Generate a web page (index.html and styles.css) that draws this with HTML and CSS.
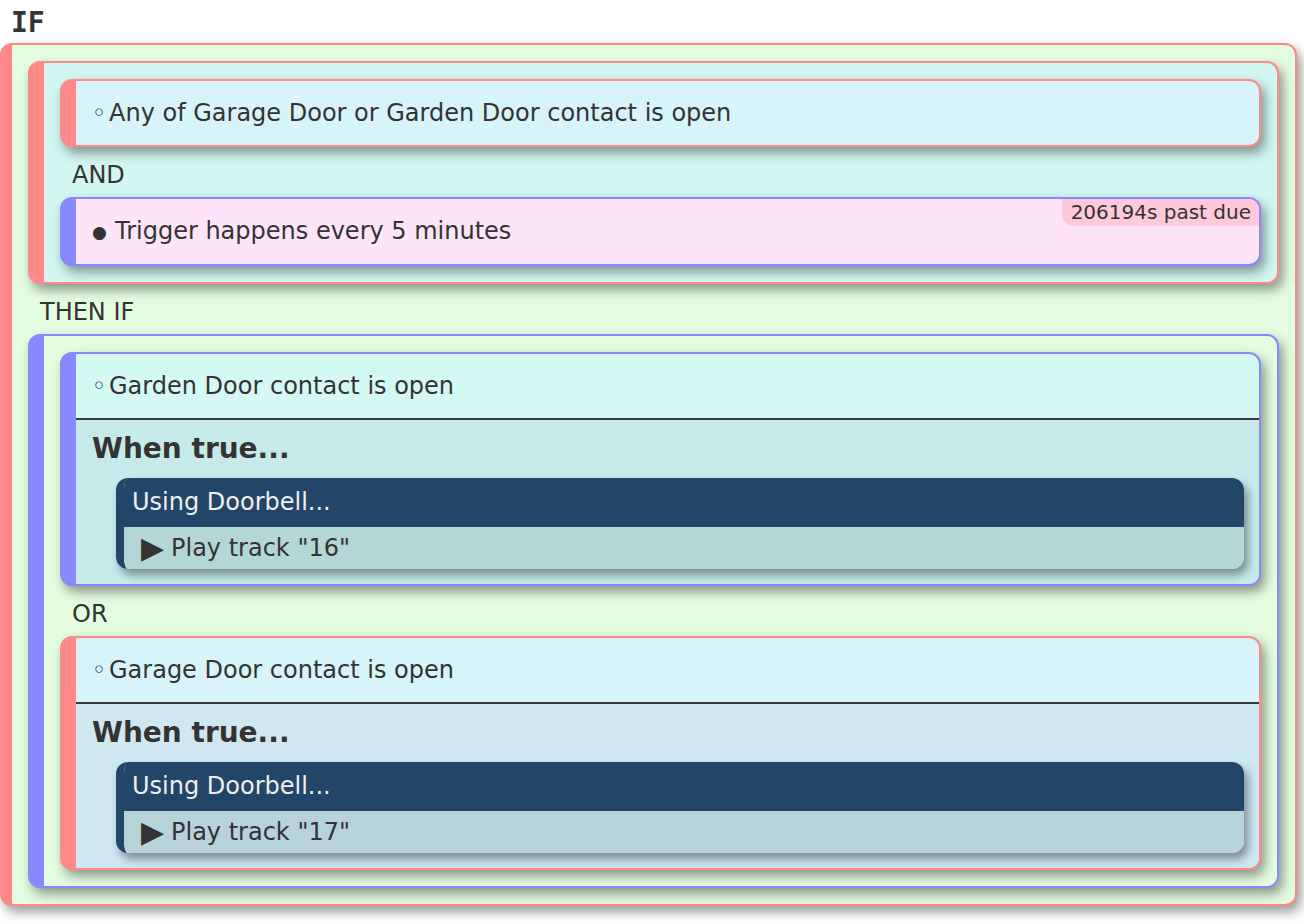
FILE: index.html
```html
<!DOCTYPE html>
<html>
<head>
<meta charset="utf-8">
<title>Rule</title>
<link rel="stylesheet" href="styles.css">
</head>
<body>
<h1 class="title">IF</h1>
<div class="group outer">
  <div class="group and-group">
    <div class="cond cond-red">
      <div class="cond-text"><span class="bullet">◦</span>Any of Garage Door or Garden Door contact is open</div>
    </div>
    <div class="label">AND</div>
    <div class="cond cond-blue cond-pink">
      <div class="cond-text"><span class="bullet bullet-fill">●</span>Trigger happens every 5 minutes</div>
      <span class="badge">206194s past due</span>
    </div>
  </div>
  <div class="label">THEN IF</div>
  <div class="group then-group">
    <div class="cond cond-blue branch-a">
      <div class="cond-text"><span class="bullet">◦</span>Garden Door contact is open</div>
      <div class="when">
        <h3 class="when-title">When true...</h3>
        <div class="action">
          <div class="action-head">Using Doorbell...</div>
          <div class="action-body"><span class="play">▶</span>Play track "16"</div>
        </div>
      </div>
    </div>
    <div class="label">OR</div>
    <div class="cond cond-red branch-b">
      <div class="cond-text"><span class="bullet">◦</span>Garage Door contact is open</div>
      <div class="when">
        <h3 class="when-title">When true...</h3>
        <div class="action">
          <div class="action-head">Using Doorbell...</div>
          <div class="action-body"><span class="play">▶</span>Play track "17"</div>
        </div>
      </div>
    </div>
  </div>
</div>
</body>
</html>
```
FILE: styles.css
```css
* { box-sizing: border-box; }

body {
  margin: 0;
  padding: 0 7px 30px 0;
  font-family: "DejaVu Sans", Verdana, sans-serif;
  font-size: 24px;
  color: #333;
  background: #fff;
}

.title {
  font-family: "DejaVu Sans Mono", monospace;
  font-weight: bold;
  font-size: 28px;
  line-height: 32px;
  margin: 7px 0 4px 11px;
}

.group {
  border: 2px solid;
  border-radius: 12px;
  padding: 16px;
  box-shadow: 4px 6px 12px rgba(0, 0, 0, 0.4);
}

.outer {
  border-color: #ff8888;
  border-left-width: 12px;
  background: #e4fde0;
}

.and-group {
  border-color: #ff8888;
  border-left-width: 16px;
  background: #d2f6f2;
}

.then-group {
  border-color: #8888ff;
  border-left-width: 16px;
  background: #e4fde0;
}

.label {
  padding: 14px 12px 8px;
  line-height: 28px;
}

.cond {
  position: relative;
  border: 2px solid;
  border-left-width: 16px;
  border-radius: 12px;
  background: #d6f4fa;
  box-shadow: 4px 6px 12px rgba(0, 0, 0, 0.4);
  overflow: hidden;
}

.cond-red { border-color: #ff8888; }
.cond-blue { border-color: #8888ff; }
.cond-pink { background: #fde4f8; }

.branch-a { background: #d4f8f4; }
.branch-a .when { background: #c6eaea; }
.branch-a .action-body { background: #b4d6d6; }

.branch-b { background: #d6f4fa; }
.branch-b .when { background: #cfe7f0; }
.branch-b .action-body { background: #b8d2da; }

.cond-text {
  padding: 18px 16px;
  line-height: 28px;
  white-space: nowrap;
}

.bullet {
  display: inline-block;
  width: 17px;
}

.bullet-fill {
  width: 23px;
  font-size: 17px;
  vertical-align: 1px;
}

.badge {
  position: absolute;
  top: 0;
  right: 0;
  background: #ffc9dc;
  font-size: 20px;
  line-height: 23px;
  padding: 2px 8px 2px 9px;
  border-bottom-left-radius: 12px;
}

.when {
  border-top: 2px solid #3a3a3a;
  padding: 12px 15px 15px 16px;
}

.when-title {
  margin: 0 0 13px;
  font-size: 28px;
  line-height: 33px;
  font-weight: bold;
}

.action {
  margin-left: 24px;
  border-left: 8px solid #234567;
  border-radius: 12px;
  overflow: hidden;
  box-shadow: 4px 6px 10px rgba(0, 0, 0, 0.4);
}

.action-head {
  background: #234567;
  color: #eeeeee;
  padding: 10px 8px 11px;
  line-height: 28px;
}

.action-body {
  padding: 7px 8px 7px 17px;
  line-height: 28px;
}

.play {
  display: inline-block;
  width: 30px;
  font-size: 30px;
  line-height: 27px;
  vertical-align: top;
}
```
